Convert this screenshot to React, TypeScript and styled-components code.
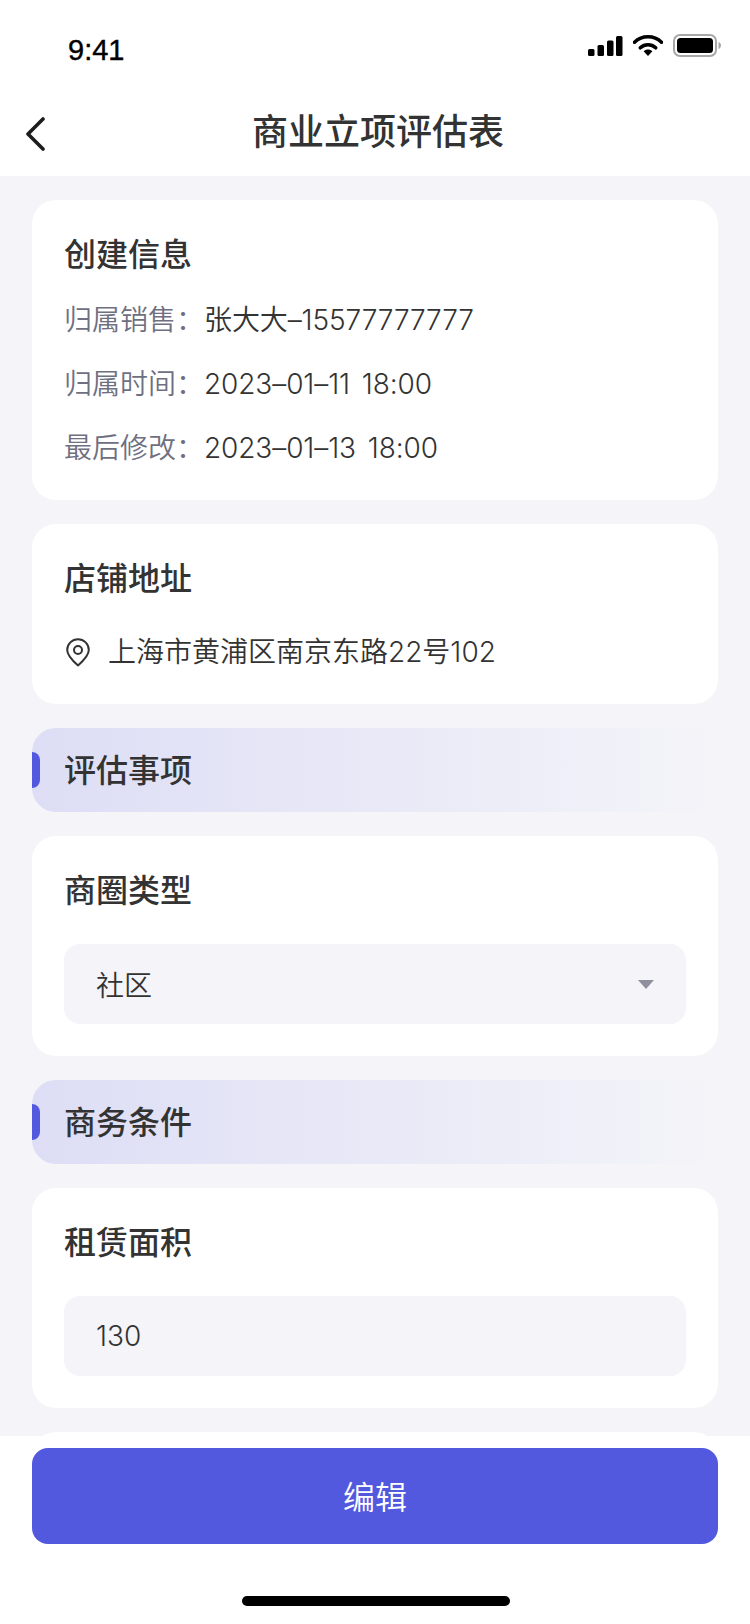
import React from 'react';
import styled, { createGlobalStyle } from 'styled-components';

const GlobalStyle = createGlobalStyle`
    html, body {
        margin: 0;
        padding: 0;
        background: #fff;
    }
    body {
        font-family: Inter, "Noto Sans CJK SC", sans-serif;
        color: #333;
    }
`

type InfoRow = {
    label: string;
    value: string;
}

const createInfo: InfoRow[] = [
    { label: '归属销售：', value: '张大大–15577777777' },
    { label: '归属时间：', value: '2023–01–11 18:00' },
    { label: '最后修改：', value: '2023–01–13 18:00' },
];

const SignalIcon = () => (
    <svg width="35" height="22" viewBox="0 0 35 22">
        <rect x="0" y="14" width="6.5" height="7" rx="1.5" fill="#000" />
        <rect x="9.5" y="10" width="6.5" height="11" rx="1.5" fill="#000" />
        <rect x="19" y="5.5" width="6.5" height="15.5" rx="1.5" fill="#000" />
        <rect x="28" y="1" width="6.5" height="20" rx="1.5" fill="#000" />
    </svg>
);

const WifiIcon = () => (
    <svg width="30" height="23" viewBox="0 0 30 23">
        <path d="M1.5 8.2C9 1 21 1 28.5 8.2" fill="none" stroke="#000" strokeWidth="3.6" strokeLinecap="round" />
        <path d="M7.3 13.8C11.6 9.8 18.4 9.8 22.7 13.8" fill="none" stroke="#000" strokeWidth="3.6" strokeLinecap="round" />
        <path d="M10.6 17.2C13.2 15 16.8 15 19.4 17.2L15 22Z" fill="#000" />
    </svg>
);

const BatteryIcon = () => (
    <svg width="48" height="23" viewBox="0 0 48 23">
        <rect x="1" y="1" width="42" height="21" rx="6" fill="none" stroke="#a8a8a8" strokeWidth="2" />
        <rect x="4" y="4" width="36" height="15" rx="3.5" fill="#000" />
        <path d="M45.5 8C47 8.6 48 9.9 48 11.5C48 13.1 47 14.4 45.5 15Z" fill="#a8a8a8" />
    </svg>
);

const BackIcon = () => (
    <svg width="20" height="34" viewBox="0 0 20 34">
        <path d="M18 2L3 17L18 32" fill="none" stroke="#1c1c1c" strokeWidth="3.6" strokeLinecap="round" strokeLinejoin="round" />
    </svg>
);

const PinIcon = () => (
    <svg width="24" height="29" viewBox="0 0 24 29">
        <path d="M12 27.5C5.5 21.8 1.2 17.2 1.2 12A10.8 10.8 0 0 1 22.8 12C22.8 17.2 18.5 21.8 12 27.5Z" fill="none" stroke="#333" strokeWidth="2" strokeLinejoin="round" />
        <circle cx="12" cy="12" r="4" fill="none" stroke="#333" strokeWidth="2" />
    </svg>
);

const App = () => {
    return (
        <Page>
            <GlobalStyle />
            <StatusBar>
                <Time>9:41</Time>
                <StatusIcons>
                    <SignalIcon />
                    <WifiIcon />
                    <BatteryIcon />
                </StatusIcons>
            </StatusBar>
            <NavBar>
                <BackButton><BackIcon /></BackButton>
                <NavTitle>商业立项评估表</NavTitle>
            </NavBar>
            <Content>
                <Card>
                    <CardTitle $gap={22}>创建信息</CardTitle>
                    <InfoList>
                        {createInfo.map((row) => (
                            <Row key={row.label}>
                                <Label>{row.label}</Label>
                                <Value>{row.value}</Value>
                            </Row>
                        ))}
                    </InfoList>
                </Card>
                <Card>
                    <CardTitle>店铺地址</CardTitle>
                    <Address>
                        <PinIcon />
                        <span>上海市黄浦区南京东路22号102</span>
                    </Address>
                </Card>
                <SectionBand>
                    <Accent />
                    <SectionTitle>评估事项</SectionTitle>
                </SectionBand>
                <Card>
                    <CardTitle>商圈类型</CardTitle>
                    <Field>
                        <span>社区</span>
                        <Caret />
                    </Field>
                </Card>
                <SectionBand>
                    <Accent />
                    <SectionTitle>商务条件</SectionTitle>
                </SectionBand>
                <Card>
                    <CardTitle>租赁面积</CardTitle>
                    <Field>
                        <span>130</span>
                    </Field>
                </Card>
                <EmptyCard />
            </Content>
            <BottomBar>
                <EditButton>编辑</EditButton>
                <HomeIndicator />
            </BottomBar>
        </Page>
    )
}

export default App;

const Page = styled.div`
    width: 750px;
    height: 1624px;
    display: flex;
    flex-direction: column;
    overflow: hidden;
    background: #f4f4f9;
`

const StatusBar = styled.div`
    flex: none;
    height: 88px;
    box-sizing: border-box;
    padding: 34px 29px 0 68px;
    display: flex;
    justify-content: space-between;
    align-items: flex-start;
    background: #fff;
`

const Time = styled.div`
    font-family: "Liberation Sans", Arial, sans-serif;
    font-size: 29px;
    line-height: 32px;
    color: #000;
    -webkit-text-stroke: 0.4px #000;
`

const StatusIcons = styled.div`
    display: flex;
    align-items: center;
    gap: 10px;
`

const NavBar = styled.div`
    flex: none;
    height: 88px;
    display: flex;
    align-items: center;
    background: #fff;
    padding: 0 0 0 25px;
`

const BackButton = styled.div`
    width: 20px;
    height: 34px;
    margin-top: 3px;
`

const NavTitle = styled.div`
    flex: 1;
    padding-right: 45px;
    margin-left: 6px;
    text-align: center;
    font-size: 36px;
    line-height: 50px;
    font-weight: 500;
    color: #333;
`

const Content = styled.div`
    flex: 1;
    min-height: 0;
    overflow: hidden;
    box-sizing: border-box;
    padding: 24px 32px 0;
    display: flex;
    flex-direction: column;
    gap: 24px;
`

const Card = styled.section`
    flex: none;
    background: #fff;
    border-radius: 24px;
    padding: 32px;
`

const EmptyCard = styled(Card)`
    height: 160px;
`

const CardTitle = styled.h2<{ $gap?: number }>`
    margin: 0 0 ${(p) => p.$gap ?? 30}px;
    font-size: 32px;
    line-height: 46px;
    font-weight: 500;
    color: #333;
`

const InfoList = styled.div`
    display: flex;
    flex-direction: column;
    gap: 24px;
`

const Row = styled.div`
    display: flex;
    font-size: 28px;
    line-height: 40px;
    font-weight: 350;
    color: #333;
`

const Label = styled.span`
    width: 140px;
    flex: none;
    color: #6f6f82;
`

const Value = styled.span`
    letter-spacing: -0.1px;
    word-spacing: 4px;
`

const Address = styled.div`
    display: flex;
    align-items: center;
    gap: 18px;
    font-size: 28px;
    line-height: 40px;
    font-weight: 350;
    color: #333;
    padding-left: 2px;
`

const SectionBand = styled.div`
    flex: none;
    height: 84px;
    display: flex;
    align-items: center;
    gap: 24px;
    border-radius: 24px;
    background: linear-gradient(90deg, #dddef5 0%, #f4f4f9 100%);
`

const Accent = styled.div`
    width: 8px;
    height: 36px;
    background: #5259de;
    border-radius: 0 8px 8px 0;
`

const SectionTitle = styled.div`
    font-size: 32px;
    line-height: 46px;
    padding-top: 2px;
    font-weight: 500;
    color: #333;
`

const Field = styled.div`
    height: 80px;
    box-sizing: border-box;
    padding: 0 32px;
    display: flex;
    align-items: center;
    justify-content: space-between;
    background: #f4f4f9;
    border-radius: 16px;
    font-size: 28px;
    font-weight: 350;
    color: #333;
`

const Caret = styled.div`
    width: 0;
    height: 0;
    border-left: 8px solid transparent;
    border-right: 8px solid transparent;
    border-top: 9px solid #8f8f9d;
`

const BottomBar = styled.div`
    flex: none;
    height: 188px;
    box-sizing: border-box;
    padding: 12px 32px 0;
    display: flex;
    flex-direction: column;
    align-items: center;
    background: #fff;
`

const EditButton = styled.button`
    width: 100%;
    height: 96px;
    border: none;
    border-radius: 16px;
    background: #5259de;
    color: #fff;
    font-family: inherit;
    font-size: 32px;
    font-weight: 350;
    padding: 0 0 2px;
`

const HomeIndicator = styled.div`
    width: 268px;
    height: 10px;
    margin: 52px 0 0 2px;
    border-radius: 5px;
    background: #000;
`
